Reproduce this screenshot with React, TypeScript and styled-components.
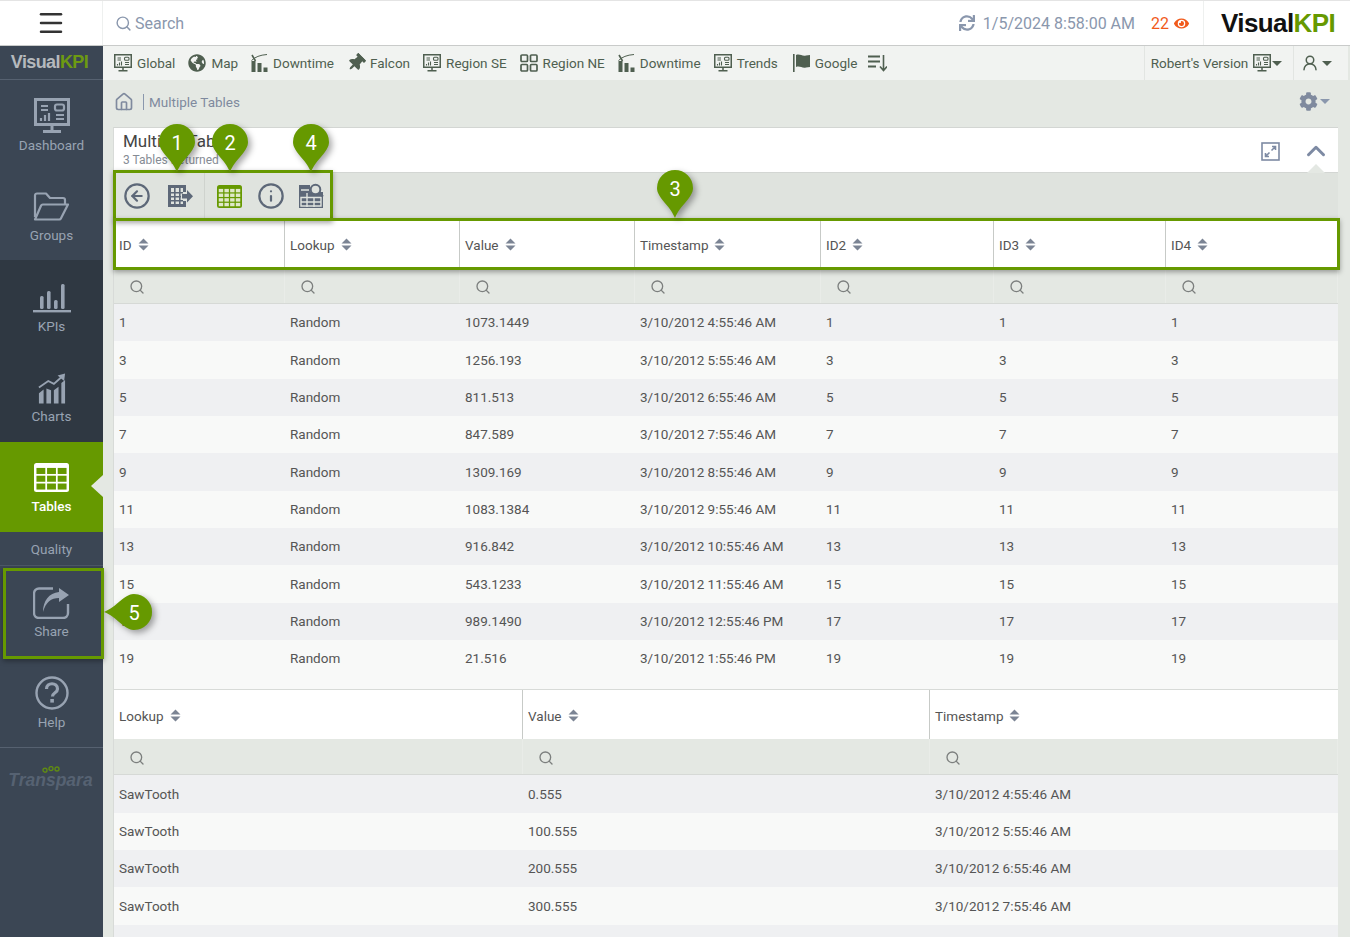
import React from 'react';
import styled, { createGlobalStyle } from 'styled-components';
import { Search, Menu, House, ChevronUp, CircleArrowLeft, Info, UserRound } from 'lucide-react';
import { FaGlobeAmericas, FaThumbtack, FaCog, FaSync, FaEye } from 'react-icons/fa';

const GREEN = '#669900';

const GlobalStyle = createGlobalStyle`
  html, body {
    margin: 0;
    padding: 0;
    height: 937px;
    overflow: hidden;
    background: #e4e8e3;
    font-family: Roboto, "Liberation Sans", sans-serif;
  }
  * { box-sizing: border-box; }
`;

const Page = styled.div`
  position: relative;
  width: 1350px;
  height: 937px;
  overflow: hidden;
  display: flex;
  flex-direction: column;
`;

const TopBar = styled.header`
  display: flex;
  align-items: center;
  height: 46px;
  background: #fff;
  border-top: 1px solid #e4e4e4;
  border-bottom: 1px solid #c9cbca;
  flex: none;
`;

const Burger = styled.div`
  width: 103px;
  height: 100%;
  display: flex;
  align-items: center;
  justify-content: center;
  border-right: 1px solid #eef0ef;
  color: #333;
`;

const SearchBox = styled.div`
  display: flex;
  align-items: center;
  gap: 3px;
  padding-left: 12px;
  flex: 1;
  font-size: 16px;
  color: #8a97ad;
`;

const Clock = styled.div`
  display: flex;
  align-items: center;
  gap: 8px;
  font-size: 16px;
  color: #8a97ad;
`;

const Alerts = styled.div`
  display: flex;
  align-items: center;
  gap: 5px;
  margin-left: 16px;
  margin-right: 14px;
  font-size: 16px;
  color: #f15a1b;
`;

const LogoCell = styled.div`
  width: 147px;
  height: 100%;
  display: flex;
  align-items: center;
  padding-left: 17px;
  border-left: 1px solid #eef0ef;
`;

const Logo = styled.span<{ $size: number; $dim?: boolean }>`
  font-family: "Liberation Sans", sans-serif;
  font-weight: 700;
  font-size: ${(p) => p.$size}px;
  letter-spacing: -0.6px;
  color: ${(p) => (p.$dim ? '#b5b9bd' : '#111')};
  white-space: nowrap;
  b { color: ${(p) => (p.$dim ? '#6d9a12' : GREEN)}; }
`;

const Body = styled.div`
  display: flex;
  flex: 1;
  min-height: 0;
`;

const Sidebar = styled.nav`
  width: 103px;
  flex: none;
  display: flex;
  flex-direction: column;
  background: #3b4654;
`;

const SideLogo = styled.div`
  height: 34px;
  display: flex;
  align-items: center;
  justify-content: center;
  padding-right: 4px;
  border-bottom: 1px solid #566170;
`;

const DarkGroup = styled.div`
  background: #2f3842;
`;

const NavItem = styled.div<{ $h: number; $pt: number; $gap: number; $active?: boolean }>`
  position: relative;
  height: ${(p) => p.$h}px;
  padding-top: ${(p) => p.$pt}px;
  display: flex;
  flex-direction: column;
  align-items: center;
  gap: ${(p) => p.$gap}px;
  font-size: 13.5px;
  line-height: 16px;
  color: ${(p) => (p.$active ? '#fff' : '#98a3b2')};
  background: ${(p) => (p.$active ? GREEN : 'transparent')};
  font-weight: ${(p) => (p.$active ? 500 : 400)};
  svg { flex: none; }
`;

const ActiveArrow = styled.span`
  position: absolute;
  right: 0;
  top: 33px;
  border-style: solid;
  border-width: 11.5px 12px 11.5px 0;
  border-color: transparent #e4e8e3 transparent transparent;
`;

const QualityItem = styled.div`
  height: 34px;
  display: flex;
  align-items: center;
  justify-content: center;
  font-size: 13.5px;
  color: #98a3b2;
  border-bottom: 1px solid #4d5866;
`;

const HelpItem = styled(NavItem)`
  border-bottom: 1px solid #566170;
`;

const TransparaBlock = styled.div`
  margin-top: 18px;
  padding-right: 2px;
  display: flex;
  flex-direction: column;
  align-items: center;
`;

const Transpara = styled.div`
  margin-top: -1px;
  line-height: 17px;
  font-family: "Liberation Sans", sans-serif;
  font-size: 17.5px;
  font-weight: 700;
  font-style: italic;
  color: #566272;
`;

const Main = styled.main`
  flex: 1;
  min-width: 0;
  display: flex;
  flex-direction: column;
`;

const LinkBar = styled.div`
  height: 34px;
  flex: none;
  display: flex;
  align-items: center;
  padding-left: 11px;
  margin-right: 2px;
  background: #f1f3f1;
  color: #4f5f50;
  font-size: 13.5px;
`;

const LinkList = styled.div`
  display: flex;
  align-items: center;
  gap: 13px;
  flex: 1;
`;

const LinkItem = styled.span`
  display: flex;
  align-items: center;
  gap: 5px;
  white-space: nowrap;
`;

const VersionCell = styled.div`
  height: 100%;
  width: 150px;
  display: flex;
  align-items: center;
  justify-content: center;
  gap: 5px;
  padding-right: 5px;
  border-left: 1px solid #e2e5e2;
  border-right: 1px solid #e2e5e2;
`;

const VersionIcon = styled.span`
  display: flex;
  align-items: center;
  gap: 1px;
`;

const UserCell = styled.div`
  width: 54px;
  display: flex;
  align-items: center;
  justify-content: center;
  gap: 3px;
  padding-right: 9px;
`;

const Caret = styled.span<{ $color?: string }>`
  display: inline-block;
  border-style: solid;
  border-width: 5px 5px 0;
  border-color: ${(p) => p.$color || '#4f5f50'} transparent transparent;
`;

const Crumbs = styled.div`
  height: 47px;
  flex: none;
  display: flex;
  align-items: center;
  gap: 2px;
  padding: 0 20px 4px 11px;
  color: #7f8a9e;
  font-size: 13.5px;
`;

const CrumbText = styled.span`
  flex: 1;
  margin-left: 7px;
  padding-left: 5px;
  border-left: 1px solid #8a97ad;
  line-height: 16px;
`;

const Card = styled.section`
  margin: 0 12px 0 10px;
  flex: 1;
  min-height: 0;
  overflow: hidden;
  border-top: 1px solid #d3d6d3;
  border-left: 1px solid #d8dbd8;
`;

const CardHeader = styled.div`
  position: relative;
  height: 45px;
  background: #fff;
  display: flex;
  align-items: flex-start;
  padding: 2px 7px 0 9px;
  border-bottom: 1px solid #d3d6d3;
`;

const CardTitle = styled.div`
  flex: 1;
  font-size: 17px;
  color: #444;
  line-height: 20px;
  padding-top: 1px;
  small {
    display: block;
    font-size: 12px;
    line-height: 14px;
    margin-top: 2px;
    color: #858b94;
  }
`;

const CardActions = styled.div`
  display: flex;
  align-items: center;
  gap: 21px;
  padding-top: 6px;
  color: #7d8aa3;
`;

const Notch = styled.span`
  position: absolute;
  right: 13px;
  bottom: -1px;
  border-style: solid;
  border-width: 0 9px 9px;
  border-color: transparent transparent #e4e8e3;
`;

const ToolRow = styled.div`
  height: 46px;
  display: flex;
  align-items: center;
  background: #dfe3de;
  color: #5d6878;
`;

const ToolGroup = styled.div<{ $w: number; $pl: number; $gap: number; $last?: boolean }>`
  width: ${(p) => p.$w}px;
  height: 100%;
  display: flex;
  align-items: center;
  gap: ${(p) => p.$gap}px;
  padding-left: ${(p) => p.$pl}px;
  border-right: ${(p) => (p.$last ? 'none' : '1px solid #cfd3ce')};
`;

const Grid = styled.div<{ $cols: string }>`
  display: grid;
  grid-template-columns: ${(p) => p.$cols};
`;

const HeadRow = styled(Grid)<{ $h: number }>`
  height: ${(p) => p.$h}px;
  background: #fff;
  font-size: 13.5px;
  color: #555;
`;

const HeadCell = styled.div`
  display: flex;
  align-items: center;
  gap: 6px;
  padding: 2px 0 0 5px;
  border-right: 1px solid #c7cac7;
  svg { color: #7b8494; }
  &:last-child { border-right: none; }
`;

const FilterRow = styled(Grid)`
  height: 36px;
  background: #e4e8e3;
  border-bottom: 1px solid #d6d9d6;
`;

const FilterCell = styled.div`
  display: flex;
  align-items: center;
  padding: 2px 0 0 15px;
  color: #7c7f7e;
  border-right: 1px solid #e9ece8;
`;

const DataRow = styled(Grid)<{ $odd: boolean }>`
  height: 37.35px;
  background: ${(p) => (p.$odd ? '#eff0f2' : '#f8f9f8')};
  font-size: 13.5px;
  color: #555;
`;

const DataCell = styled.div`
  display: flex;
  align-items: center;
  padding: 0 0 1px 5px;
`;

const TableGap = styled.div`
  height: 13px;
  background: #f8f9f8;
  border-bottom: 1px solid #d8dbd8;
`;

const HighlightBox = styled.div<{ $l: number; $t: number; $w: number; $h: number }>`
  position: absolute;
  left: ${(p) => p.$l}px;
  top: ${(p) => p.$t}px;
  width: ${(p) => p.$w}px;
  height: ${(p) => p.$h}px;
  border: 3px solid ${GREEN};
  box-shadow: 0 2px 5px rgba(0, 0, 0, 0.35);
  pointer-events: none;
`;

const PinWrap = styled.div<{ $x: number; $y: number }>`
  position: absolute;
  left: ${(p) => p.$x - 18}px;
  top: ${(p) => p.$y - 18}px;
  width: 36px;
  height: 36px;
  padding-top: 1px;
  display: flex;
  align-items: center;
  justify-content: center;
  color: #fff;
  font-size: 20px;
  span { position: relative; }
`;

const PinShape = styled.svg<{ $left?: boolean }>`
  position: absolute;
  left: 0;
  top: 0;
  overflow: visible;
  transform-origin: 18px 18px;
  transform: ${(p) => (p.$left ? 'rotate(90deg)' : 'none')};
  filter: drop-shadow(${(p) => (p.$left ? '3px -3px' : '3px 3px')} 3px rgba(0, 0, 0, 0.35));
`;

const Pin = ({ x, y, n, left }: { x: number; y: number; n: number; left?: boolean }) => (
  <PinWrap $x={x} $y={y}>
    <PinShape $left={left} width="36" height="48" viewBox="0 0 36 48">
      <path d="M18 0a18 18 0 0 1 18 18c0 10-13 17-18 30C13 35 0 28 0 18A18 18 0 0 1 18 0z" fill={GREEN} />
    </PinShape>
    <span>{n}</span>
  </PinWrap>
);

const MonitorIcon = ({ size = 18 }: { size?: number }) => (
  <svg width={size} height={size} viewBox="0 0 36 36" fill="none" stroke="currentColor" strokeWidth="2.2">
    <rect x="1.5" y="1.5" width="33" height="25" strokeWidth="3" />
    <path d="M7 8h7M7 12h7M22 17h8M22 21h8" />
    <rect x="21" y="6.5" width="9" height="6" rx="2" />
    <path d="M7 23v-3M11 23v-6M15 23v-8" />
    <path d="M18 27v5M9 33.5h18" strokeWidth="3" />
  </svg>
);

const DowntimeIcon = () => (
  <svg width="17" height="18" viewBox="0 0 17 18" fill="currentColor">
    <rect x="0.5" y="7" width="4" height="11" />
    <rect x="6.5" y="9" width="4" height="9" />
    <rect x="12.5" y="13.5" width="4" height="4.5" />
    <path d="M0.5 6.5C4 3 9 1 16 0.5" fill="none" stroke="currentColor" strokeWidth="1" />
    <path d="M1 1l3.5 6" fill="none" stroke="currentColor" strokeWidth="1.6" />
  </svg>
);

const SquaresIcon = () => (
  <svg width="18" height="18" viewBox="0 0 18 18" fill="none" stroke="currentColor" strokeWidth="1.7">
    <rect x="1" y="1" width="6.5" height="6.5" rx="1" />
    <rect x="10.5" y="1" width="6.5" height="6.5" rx="1" />
    <rect x="1" y="10.5" width="6.5" height="6.5" rx="1" />
    <rect x="10.5" y="10.5" width="6.5" height="6.5" rx="1" />
  </svg>
);

const FlagIcon = () => (
  <svg width="19" height="18" viewBox="-2 0 19 18" fill="currentColor">
    <rect x="0" y="0" width="1.6" height="18" />
    <path d="M3 1c4-1.5 6 1.5 10 .5l4-.5v12l-4 .5c-4 1-6-2-10-.5z" />
  </svg>
);

const SortLinesIcon = () => (
  <svg width="19" height="18" viewBox="0 0 19 18" fill="none" stroke="currentColor" strokeWidth="1.9" style={{ marginLeft: -2 }}>
    <path d="M0 2.5h12M0 7.5h12M0 12.5h8" />
    <path d="M15.5 1v15M12 12.5l3.5 4 3.5-4" strokeWidth="1.6" />
  </svg>
);

const SortIcon = () => (
  <svg width="11" height="13" viewBox="0 0 11 13" fill="currentColor">
    <path d="M5.5 0.5L10.5 5.5H0.5zM0.5 7.5H10.5L5.5 12.5z" />
  </svg>
);

const FolderIcon = () => (
  <svg width="37" height="29" viewBox="0 0 37 29" fill="none" stroke="currentColor" strokeWidth="2.2" strokeLinejoin="round">
    <path d="M2 25V3.5A2 2 0 0 1 4 1.5h9l4 4.5h13a2 2 0 0 1 2 2v4" />
    <path d="M2 27.5h24a2 2 0 0 0 2-1.2l7-13.8H10a2 2 0 0 0-2 1.2z" />
  </svg>
);

const KpiIcon = () => (
  <svg width="38" height="30" viewBox="0 0 38 30" fill="currentColor">
    <rect x="7" y="13" width="3.6" height="13" rx="1.5" />
    <rect x="14" y="8" width="3.6" height="18" rx="1.5" />
    <rect x="21" y="17" width="3.6" height="9" rx="1.5" />
    <rect x="28" y="1" width="3.6" height="25" rx="1.5" />
    <rect x="0" y="27" width="38" height="2.4" />
  </svg>
);

const ChartsIcon = () => (
  <svg width="28" height="31" viewBox="0 0 30 32" fill="currentColor">
    <path d="M1 32V21l5-4v15zM9 32V16l5 2v14zM17 32V18l5-4v18zM25 32V10l4-3v25z" />
    <path d="M1 15l10-7 6 3 8-7" fill="none" stroke="currentColor" strokeWidth="2" />
    <path d="M21 2l8-2-1 8z" />
  </svg>
);

// rounded block with a solid top band and a grid of cells cut into it
const TableIcon = ({ w, h, bg, cell, cols, rows }: { w: number; h: number; bg: string; cell: string; cols: number; rows: number }) => {
  const m = w * 0.07;
  const top = h * 0.17;
  const gap = w * 0.05;
  const cw = (w - 2 * m - gap * (cols - 1)) / cols;
  const ch = (h - top - m - gap * (rows - 1)) / rows;
  const cells = [];
  for (let r = 0; r < rows; r++) {
    for (let c = 0; c < cols; c++) {
      cells.push(<rect key={`${r}-${c}`} x={m + c * (cw + gap)} y={top + r * (ch + gap)} width={cw} height={ch} fill={cell} />);
    }
  }
  return (
    <svg width={w} height={h} viewBox={`0 0 ${w} ${h}`}>
      <rect width={w} height={h} rx="2.5" fill={bg} />
      {cells}
    </svg>
  );
};

const ShareIcon = () => (
  <svg width="37" height="32" viewBox="0 0 37 32" fill="none">
    <path d="M20 1.5H6a5 5 0 0 0-5 5V26a5 5 0 0 0 5 5H30a5 5 0 0 0 5-5V17" stroke="currentColor" strokeWidth="2.4" />
    <path d="M26 1l10 7-10 7v-4c-8 0-13 4-16 14 0-11 6-19 16-20z" fill="currentColor" />
  </svg>
);

const HelpIcon = () => (
  <svg width="34" height="34" viewBox="0 0 34 34" fill="none" stroke="currentColor">
    <circle cx="17" cy="17" r="15.5" strokeWidth="2.4" />
    <path d="M11.5 13c0-7 11-7 11 0 0 4-5 3.5-5 7.5" strokeWidth="3.2" />
    <rect x="15.3" y="23" width="3.6" height="3.6" fill="currentColor" stroke="none" />
  </svg>
);

const TransparaDots = () => (
  <svg width="18" height="7" viewBox="0 0 18 7" fill="none" stroke="#5f8a14" strokeWidth="1.4">
    <circle cx="3" cy="4.2" r="2" />
    <circle cx="9" cy="2.6" r="2" />
    <circle cx="15" cy="3" r="2" />
  </svg>
);

const ExpandIcon = () => (
  <svg width="19" height="19" viewBox="0 0 19 19" fill="none" stroke="currentColor" strokeWidth="1.6">
    <rect x="1" y="1" width="17" height="17" />
    <path d="M10.5 8.5l4-4M11 4.5h3.5V8M8.5 10.5l-4 4M4.5 11v3.5H8" />
  </svg>
);

const TableExportIcon = () => (
  <svg width="26" height="24" viewBox="0 0 26 24" fill="currentColor">
    <path d="M1 1h18v7h-3V4H4v16h12v-3h3v6H1z" />
    <path d="M7 4h1.6v17H7zM12 4h1.6v17H12zM3 8h13v1.4H3zM3 12h11v1.4H3zM3 16h13v1.4H3z" />
    <path d="M15 10h5V6l6 6.2-6 6.2v-4h-5z" />
  </svg>
);

const TableSearchIcon = () => (
  <svg width="26" height="26" viewBox="0 0 26 26" style={{ marginLeft: -2 }}>
    <path d="M1 2h11v7h13v16H1z" fill="currentColor" />
    <path d="M3 14.5h20v8.500H3zM3 19h20M9 10v14M16 14v10M3 7h8" stroke="#dfe3de" strokeWidth="1.4" fill="none" />
    <circle cx="17.5" cy="6.5" r="4.800" fill="#dfe3de" stroke="currentColor" strokeWidth="2" />
    <path d="M21 10l4 3.500" stroke="currentColor" strokeWidth="2.200" />
  </svg>
);

const links = [
  { label: 'Global', icon: <MonitorIcon /> },
  { label: 'Map', icon: <FaGlobeAmericas size={18} /> },
  { label: 'Downtime', icon: <DowntimeIcon /> },
  { label: 'Falcon', icon: <FaThumbtack size={18} style={{ transform: 'rotate(45deg)' }} /> },
  { label: 'Region SE', icon: <MonitorIcon /> },
  { label: 'Region NE', icon: <SquaresIcon /> },
  { label: 'Downtime', icon: <DowntimeIcon /> },
  { label: 'Trends', icon: <MonitorIcon /> },
  { label: 'Google', icon: <FlagIcon /> },
];

const firstCols = '171px 175px 175px 186px 173px 172px 1fr';
const firstHead = ['ID', 'Lookup', 'Value', 'Timestamp', 'ID2', 'ID3', 'ID4'];
const firstData = [
  [1, '1073.1449', '3/10/2012 4:55:46 AM'],
  [3, '1256.193', '3/10/2012 5:55:46 AM'],
  [5, '811.513', '3/10/2012 6:55:46 AM'],
  [7, '847.589', '3/10/2012 7:55:46 AM'],
  [9, '1309.169', '3/10/2012 8:55:46 AM'],
  [11, '1083.1384', '3/10/2012 9:55:46 AM'],
  [13, '916.842', '3/10/2012 10:55:46 AM'],
  [15, '543.1233', '3/10/2012 11:55:46 AM'],
  [17, '989.1490', '3/10/2012 12:55:46 PM'],
  [19, '21.516', '3/10/2012 1:55:46 PM'],
];

const secondCols = '409px 407px 1fr';
const secondHead = ['Lookup', 'Value', 'Timestamp'];
const secondData = [
  ['SawTooth', '0.555', '3/10/2012 4:55:46 AM'],
  ['SawTooth', '100.555', '3/10/2012 5:55:46 AM'],
  ['SawTooth', '200.555', '3/10/2012 6:55:46 AM'],
  ['SawTooth', '300.555', '3/10/2012 7:55:46 AM'],
  ['', '', ''],
];

const Head = ({ cols, names, h }: { cols: string; names: string[]; h: number }) => (
  <>
    <HeadRow $cols={cols} $h={h}>
      {names.map((n) => (
        <HeadCell key={n}>
          {n} <SortIcon />
        </HeadCell>
      ))}
    </HeadRow>
    <FilterRow $cols={cols}>
      {names.map((n) => (
        <FilterCell key={n}>
          <Search size={16} />
        </FilterCell>
      ))}
    </FilterRow>
  </>
);

export default function App() {
  return (
    <Page>
      <GlobalStyle />
      <TopBar>
        <Burger>
          <Menu size={30} strokeWidth={2} />
        </Burger>
        <SearchBox>
          <Search size={17} />
          Search
        </SearchBox>
        <Clock>
          <FaSync size={16} />
          1/5/2024 8:58:00 AM
        </Clock>
        <Alerts>
          22 <FaEye size={15} />
        </Alerts>
        <LogoCell>
          <Logo $size={26}>
            Visual<b>KPI</b>
          </Logo>
        </LogoCell>
      </TopBar>
      <Body>
        <Sidebar>
          <SideLogo>
            <Logo $size={18} $dim>
              Visual<b>KPI</b>
            </Logo>
          </SideLogo>
          <NavItem $h={90} $pt={18} $gap={3}>
            <MonitorIcon size={36} />
            Dashboard
          </NavItem>
          <NavItem $h={90} $pt={22} $gap={6}>
            <FolderIcon />
            Groups
          </NavItem>
          <DarkGroup>
            <NavItem $h={90} $pt={23} $gap={5}>
              <KpiIcon />
              KPIs
            </NavItem>
            <NavItem $h={92} $pt={23} $gap={4}>
              <ChartsIcon />
              Charts
            </NavItem>
          </DarkGroup>
          <NavItem $h={90} $pt={21} $gap={6} $active>
            <TableIcon w={35} h={29} bg="#fff" cell={GREEN} cols={3} rows={3} />
            Tables
            <ActiveArrow />
          </NavItem>
          <QualityItem>Quality</QualityItem>
          <NavItem $h={92} $pt={21} $gap={4}>
            <ShareIcon />
            Share
          </NavItem>
          <HelpItem $h={90} $pt={18} $gap={4}>
            <HelpIcon />
            Help
          </HelpItem>
          <TransparaBlock>
            <TransparaDots />
            <Transpara>Transpara</Transpara>
          </TransparaBlock>
        </Sidebar>
        <Main>
          <LinkBar>
            <LinkList>
              {links.map((l, i) => (
                <LinkItem key={i}>
                  {l.icon}
                  {l.label}
                </LinkItem>
              ))}
              <SortLinesIcon />
            </LinkList>
            <VersionCell>
              Robert's Version
              <VersionIcon>
                <MonitorIcon />
                <Caret />
              </VersionIcon>
            </VersionCell>
            <UserCell>
              <UserRound size={18} />
              <Caret />
            </UserCell>
          </LinkBar>
          <Crumbs>
            <House size={20} />
            <CrumbText>Multiple Tables</CrumbText>
            <FaCog size={19} />
            <Caret $color="#8a97ad" />
          </Crumbs>
          <Card>
            <CardHeader>
              <CardTitle>
                Multiple Tables
                <small>3 Tables Returned</small>
              </CardTitle>
              <CardActions>
                <ExpandIcon />
                <ChevronUp size={30} strokeWidth={2.4} />
              </CardActions>
              <Notch />
            </CardHeader>
            <ToolRow>
              <ToolGroup $w={91} $pl={9} $gap={16}>
                <CircleArrowLeft size={28} strokeWidth={1.9} />
                <TableExportIcon />
              </ToolGroup>
              <ToolGroup $w={200} $pl={12} $gap={15} $last>
                <TableIcon w={25} h={23} bg={GREEN} cell="#dfe8c8" cols={4} rows={4} />
                <Info size={28} strokeWidth={1.9} />
                <TableSearchIcon />
              </ToolGroup>
            </ToolRow>
            <Head cols={firstCols} names={firstHead} h={49} />
            {firstData.map((r, i) => (
              <DataRow key={i} $cols={firstCols} $odd={i % 2 === 0}>
                <DataCell>{r[0]}</DataCell>
                <DataCell>Random</DataCell>
                <DataCell>{r[1]}</DataCell>
                <DataCell>{r[2]}</DataCell>
                <DataCell>{r[0]}</DataCell>
                <DataCell>{r[0]}</DataCell>
                <DataCell>{r[0]}</DataCell>
              </DataRow>
            ))}
            <TableGap />
            <Head cols={secondCols} names={secondHead} h={49} />
            {secondData.map((r, i) => (
              <DataRow key={i} $cols={secondCols} $odd={i % 2 === 0}>
                {r.map((c, j) => (
                  <DataCell key={j}>{c}</DataCell>
                ))}
              </DataRow>
            ))}
          </Card>
        </Main>
      </Body>

      <HighlightBox $l={113} $t={170} $w={220} $h={51} />
      <HighlightBox $l={113} $t={218} $w={1227} $h={52} />
      <HighlightBox $l={3} $t={568} $w={101} $h={91} />
      <Pin x={177} y={142} n={1} />
      <Pin x={230} y={142} n={2} />
      <Pin x={675} y={188} n={3} />
      <Pin x={311} y={142} n={4} />
      <Pin x={134} y={612} n={5} left />
    </Page>
  );
}
